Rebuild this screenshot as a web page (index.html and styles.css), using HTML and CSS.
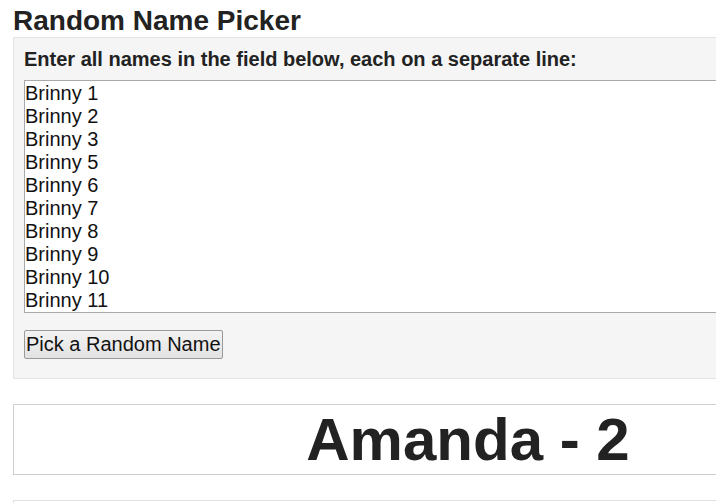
FILE: index.html
```html
<!DOCTYPE html>
<html lang="en">
<head>
    <meta charset="UTF-8">
    <meta name="viewport" content="width=device-width, initial-scale=1.0">
    <title>Random Name Picker</title>
    <link rel="stylesheet" href="styles.css">
</head>
<body>
    <div class="page">
        <h1 class="title">Random Name Picker</h1>
        <div class="entry-panel">
            <label class="entry-label" for="names">Enter all names in the field below, each on a separate line:</label>
            <textarea id="names" class="names-field">Brinny 1
Brinny 2
Brinny 3
Brinny 5
Brinny 6
Brinny 7
Brinny 8
Brinny 9
Brinny 10
Brinny 11</textarea>
            <div class="actions">
                <button class="pick-button" type="button">Pick a Random Name</button>
            </div>
        </div>
        <div class="result-box">Amanda - 2</div>
        <div class="history-box"></div>
    </div>
</body>
</html>
```

FILE: styles.css
```css
html, body {
    margin: 0;
    padding: 0;
    overflow: hidden;
    background-color: #fff;
}

body {
    font-family: 'Liberation Sans', Arial, sans-serif;
    color: #222;
}

.page {
    width: 910px;
    margin-left: 13px;
}

.title {
    font-size: 28px;
    font-weight: bold;
    line-height: 32px;
    margin: 5px 0 0 0;
}

.entry-panel {
    background-color: #f5f5f5;
    border: 1px solid #e3e3e3;
    padding: 10px;
}

.entry-label {
    display: block;
    font-size: 20px;
    font-weight: bold;
    line-height: 23px;
    margin-bottom: 9px;
}

.names-field {
    display: block;
    box-sizing: border-box;
    width: 100%;
    height: 233px;
    margin: 0;
    padding: 1px 0 0 0;
    border: 1px solid #a9a9a9;
    background-color: #fff;
    color: #111;
    font-family: 'Liberation Sans', Arial, sans-serif;
    font-size: 20px;
    line-height: 23px;
    resize: none;
    overflow: hidden;
}

.actions {
    margin-top: 17px;
    margin-bottom: 9px;
}

.pick-button {
    font-family: 'Liberation Sans', Arial, sans-serif;
    font-size: 20px;
    line-height: 23px;
    color: #111;
    padding: 2px 1px;
    border: 1px solid #9a9a9a;
    border-radius: 2px;
    background: linear-gradient(#f3f3f3, #e2e2e2);
    cursor: pointer;
}

.result-box {
    margin-top: 25px;
    border: 1px solid #cfcfcf;
    background-color: #fff;
    text-align: center;
    font-size: 60px;
    font-weight: bold;
    line-height: 69px;
    color: #222;
}

.history-box {
    margin-top: 25px;
    height: 60px;
    border: 1px solid #e0e0e0;
}
```
